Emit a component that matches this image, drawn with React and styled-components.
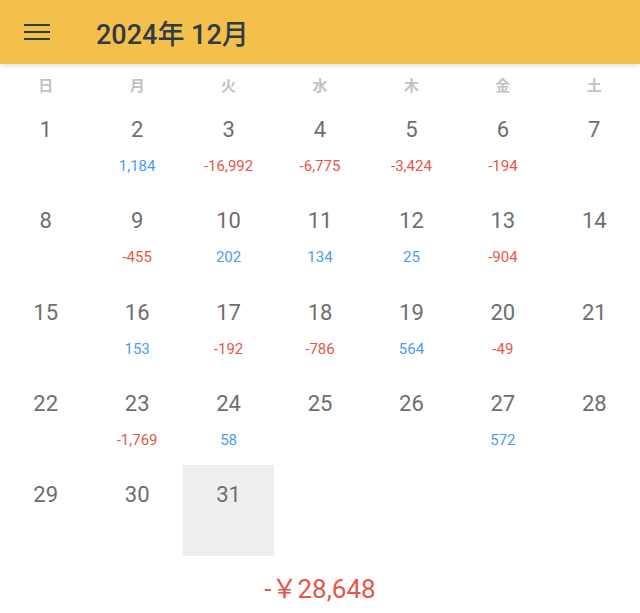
import styled, { createGlobalStyle } from "styled-components";

const Global = createGlobalStyle`
  body {
    margin: 0;
    background: #fff;
    font-family: Roboto, "Noto Sans CJK JP", sans-serif;
  }
`;

const Page = styled.div`
  width: 640px;
  height: 613px;
  display: flex;
  flex-direction: column;
  overflow: hidden;
`;

const Header = styled.header`
  height: 64px;
  background: #f4c04c;
  display: flex;
  align-items: center;
  box-shadow: 0 2px 4px rgba(0, 0, 0, 0.12);
  position: relative;
  z-index: 1;
`;

const MenuButton = styled.div`
  width: 26px;
  margin-left: 24px;
  display: flex;
  flex-direction: column;
  gap: 4.5px;
  span {
    display: block;
    height: 2.5px;
    background: #2f3b47;
  }
`;

const Title = styled.h1`
  margin: 0 0 0 46px;
  font-size: 27px;
  font-weight: 500;
  color: #2f3b47;
  font-family: Roboto, "Noto Sans CJK JP", sans-serif;
`;

const Weekdays = styled.div`
  display: grid;
  grid-template-columns: repeat(7, 1fr);
  height: 36px;
  align-items: center;
`;

const Weekday = styled.div`
  text-align: center;
  font-size: 15px;
  font-weight: 700;
  color: #c2c2c2;
  padding-top: 4px;
`;

const Grid = styled.div`
  display: grid;
  grid-template-columns: repeat(7, 1fr);
  grid-auto-rows: 91.3px;
`;

const Cell = styled.div`
  display: flex;
  flex-direction: column;
  align-items: center;
  background: ${(p) => (p.$today ? "#eeeeee" : "transparent")};
`;

const DayNum = styled.div`
  margin-top: 16px;
  font-size: 22px;
  line-height: 28px;
  color: #6e6e6e;
`;

const Amount = styled.div`
  margin-top: 13px;
  font-size: 15px;
  line-height: 19px;
  color: ${(p) => (p.$neg ? "#e5574a" : "#4a9df0")};
`;

const Total = styled.div`
  text-align: center;
  margin-top: 12px;
  font-size: 26px;
  color: #e5574a;
`;

const amounts = {
  2: "1,184", 3: "-16,992", 4: "-6,775", 5: "-3,424", 6: "-194",
  9: "-455", 10: "202", 11: "134", 12: "25", 13: "-904",
  16: "153", 17: "-192", 18: "-786", 19: "564", 20: "-49",
  23: "-1,769", 24: "58", 27: "572",
};

const days = ["日", "月", "火", "水", "木", "金", "土"];

export default function App() {
  const cells = [];
  for (let d = 1; d <= 31; d++) cells.push(d);

  return (
    <Page>
      <Global />
      <Header>
        <MenuButton>
          <span />
          <span />
          <span />
        </MenuButton>
        <Title>2024年 12月</Title>
      </Header>
      <Weekdays>
        {days.map((d) => (
          <Weekday key={d}>{d}</Weekday>
        ))}
      </Weekdays>
      <Grid>
        {cells.map((d) => (
          <Cell key={d} $today={d === 31}>
            <DayNum>{d}</DayNum>
            {amounts[d] && (
              <Amount $neg={amounts[d].startsWith("-")}>{amounts[d]}</Amount>
            )}
          </Cell>
        ))}
      </Grid>
      <Total>-￥28,648</Total>
    </Page>
  );
}
